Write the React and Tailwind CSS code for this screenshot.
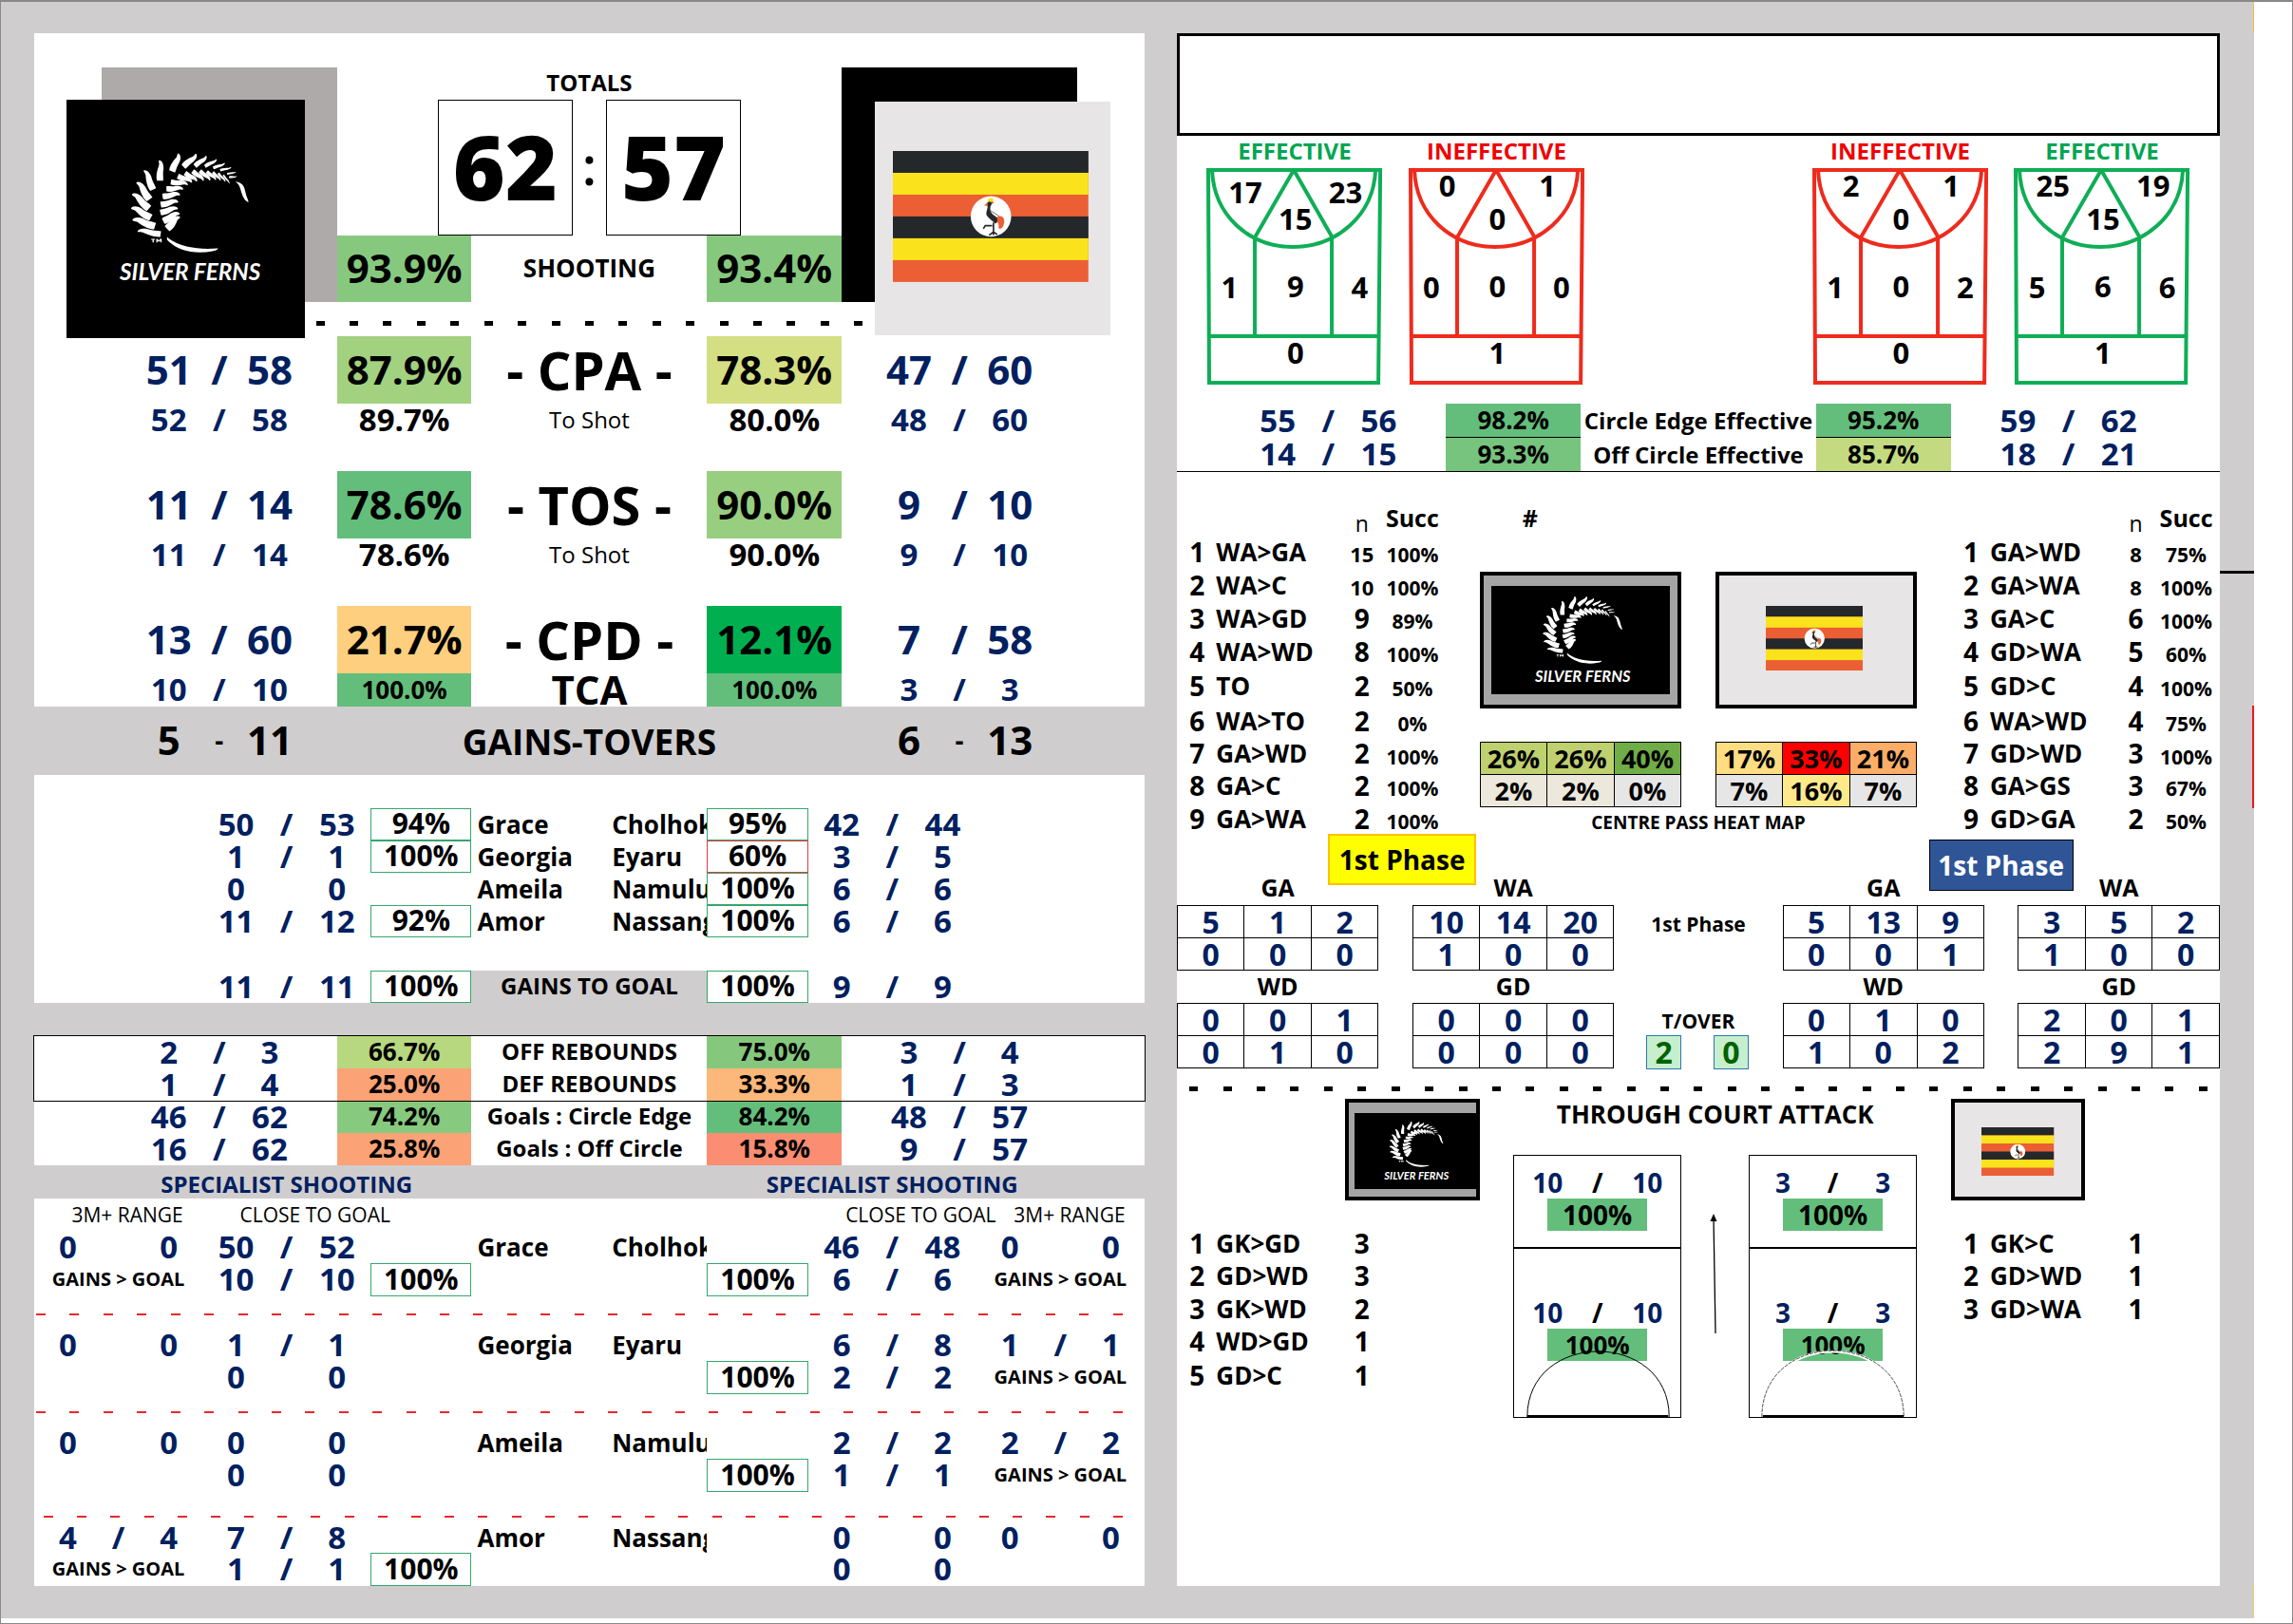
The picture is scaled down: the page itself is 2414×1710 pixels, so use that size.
import React from "react";

const GRID33 = "grid grid-rows-1 grid-cols-[repeat(33,minmax(0,1fr))] items-center [&>*]:row-start-1";
const GRID31 = "grid grid-cols-[repeat(31,minmax(0,1fr))] items-center [&>*]:row-start-1";

/* Column placements of the "made / attempted" figures on the left sheet */
const WIDE_L = ["col-start-4 col-span-2", "col-start-6", "col-start-7 col-span-2"];
const WIDE_R = ["col-start-26 col-span-2", "col-start-28", "col-start-29 col-span-2"];
const NEAR_L = ["col-start-6 col-span-2", "col-start-8", "col-start-9 col-span-2"];
const NEAR_R = ["col-start-24 col-span-2", "col-start-26", "col-start-27 col-span-2"];
const FAR_L = ["col-start-1 col-span-2", "col-start-3", "col-start-4 col-span-2"];
const FAR_R = ["col-start-29 col-span-2", "col-start-31", "col-start-32 col-span-2"];
const COURT_L = ["col-start-3 col-span-2", "col-start-5", "col-start-6 col-span-2"];
const COURT_R = ["col-start-25 col-span-2", "col-start-27", "col-start-28 col-span-2"];

function Ratio({ at, v, sep = "/", size = "text-[33px]", sepSize = "", color = "text-[#002060]" }) {
  if (!v) return null;
  return (
    <>
      <span className={`${at[0]} ${size} ${color} pb-0.5 text-center font-bold`}>{v[0]}</span>
      {!v[2] && <span className={`${at[1]} ${sepSize || size} ${color} pb-0.5 text-center font-bold`}>{sep}</span>}
      <span className={`${at[2]} ${size} ${color} pb-0.5 text-center font-bold`}>{v[1]}</span>
    </>
  );
}

function Shade({ at, bg, size, children }) {
  return (
    <span className={`${at} ${bg} ${size} flex h-full items-center justify-center pb-0.5 font-bold`}>{children}</span>
  );
}

const SH_L = "col-start-10 col-span-4";
const SH_R = "col-start-21 col-span-4";
const MID = "col-start-14 col-span-7 text-center whitespace-nowrap pb-0.5";

function leaf([x1, y1, x2, y2, w]) {
  const dx = x2 - x1;
  const dy = y2 - y1;
  const len = Math.hypot(dx, dy);
  const nx = (-dy / len) * w;
  const ny = (dx / len) * w;
  const p = (t, k) => `${(x1 + dx * t + nx * k).toFixed(1)} ${(y1 + dy * t + ny * k).toFixed(1)}`;
  return `M${p(0, -0.9)} C${p(0.3, -1.3)} ${p(0.6, -0.7)} ${p(0.8, -0.3)} C${p(0.9, -0.2)} ${p(0.98, -0.5)} ${p(1.04, -0.3)} C${p(1.05, 0.5)} ${p(0.85, 1.1)} ${p(0.6, 1)} C${p(0.35, 0.7)} ${p(0.2, 1)} ${p(0, 0.9)} Z`;
}

const LEAVES = [
  [326, 560, 256, 550, 10], [308, 535, 240, 514, 12], [295, 508, 236, 477, 12], [289, 479, 239, 434, 12],
  [291, 450, 253, 397, 12], [302, 419, 276, 360, 11], [324, 391, 324, 329, 11], [362, 362, 383, 308, 11],
  [398, 347, 438, 309, 10], [434, 345, 470, 315, 8], [466, 346, 502, 325, 6], [492, 351, 528, 337, 5],
  [514, 358, 548, 350, 4], [536, 370, 563, 364, 3], [542, 380, 566, 378, 3],
  [346, 543, 384, 506, -12], [334, 519, 383, 494, -11], [325, 492, 378, 478, -10], [326, 467, 379, 457, -10],
  [332, 441, 385, 434, -10], [344, 417, 395, 416, -9], [358, 395, 410, 402, -9], [380, 377, 424, 394, -9],
  [403, 366, 440, 391, -8], [427, 361, 461, 389, -8], [450, 360, 482, 388, -7], [472, 362, 500, 387, -6],
  [491, 364, 515, 389, -5], [508, 367, 530, 393, -4], [524, 373, 543, 399, -3],
];

function Fern({ viewBox, className }) {
  return (
    <svg viewBox={viewBox} className={className} role="img" aria-label="Silver Ferns" preserveAspectRatio="xMidYMid meet">
      <g fill="#fff">
        {LEAVES.map((l, i) => (
          <path key={i} d={leaf(l)} />
        ))}
        <path d="M346 569 C372 592 425 612 507 605 C508 609 500 612 490 614 C430 626 375 610 346 578 Z" />
        <path d="M562 393 C585 397 590 408 594 428 C597 442 601 448 604 459 C594 458 584 440 580 424 C577 410 573 402 562 393 Z" />
        <path d="M296 575 h12 v3 h-4 v8 h-4 v-8 h-4 Z M312 575 h4 l4 5 4 -5 h5 v11 h-4 v-6 l-5 5 -4 -5 v6 h-4 Z" />
        <text x="419" y="705" textAnchor="middle" fontFamily="Lato, sans-serif" fontSize="73" fontWeight="700" fontStyle="italic">
          SILVER FERNS
        </text>
      </g>
    </svg>
  );
}

function Flag({ className }) {
  return (
    <svg viewBox="0 0 618 414" className={className} role="img" aria-label="Uganda">
      <rect width="618" height="414" fill="#ec5e34" />
      <rect width="618" height="69" fill="#24282b" />
      <rect y="69" width="618" height="69" fill="#fae31c" />
      <rect y="207" width="618" height="69" fill="#24282b" />
      <rect y="276" width="618" height="69" fill="#fae31c" />
      <circle cx="310" cy="207" r="64" fill="#fff" />
      <path d="M330 208 C346 200 354 214 352 226 C350 240 342 250 334 244 C336 230 332 222 318 220 Z" fill="#ec5e34" />
      <path d="M298 158 C300 148 314 146 320 154 L312 164 Z" fill="#fae31c" />
      <path d="M304 160 C296 164 294 168 298 172 C304 178 290 196 298 206 C306 216 316 222 324 230 C332 226 332 214 326 208 C316 200 306 194 308 180 C308 172 314 170 312 162 Z" fill="#24282b" />
      <path d="M300 164 L288 172 L300 174 Z M312 158 L320 164 L312 168 Z" fill="#ec5e34" />
      <path d="M318 226 V258 M304 266 L318 256 L330 264 M318 256 V266 M314 236 H292 L286 246" fill="none" stroke="#24282b" strokeWidth="5" />
      <path d="M308 188 L336 206" stroke="#24282b" strokeWidth="2" />
    </svg>
  );
}

function BigStat({ l, lp, lbg, label, r, rp, rbg }) {
  return (
    <div className={`${GRID33} h-[71px]`}>
      <Ratio at={WIDE_L} v={l} size="text-[42px]" />
      <Shade at={SH_L} bg={lbg} size="text-[42px]">{lp}</Shade>
      <span className={`${MID} text-[56px] font-bold`}>{label}</span>
      <Shade at={SH_R} bg={rbg} size="text-[42px]">{rp}</Shade>
      <Ratio at={WIDE_R} v={r} size="text-[42px]" />
    </div>
  );
}

function SubStat({ l, lp, r, rp }) {
  return (
    <div className={`${GRID33} h-[35px]`}>
      <Ratio at={WIDE_L} v={l} />
      <span className={`${SH_L} pb-0.5 text-center text-[33px] font-bold`}>{lp}</span>
      <span className={`${MID} text-[24px]`}>To Shot</span>
      <span className={`${SH_R} pb-0.5 text-center text-[33px] font-bold`}>{rp}</span>
      <Ratio at={WIDE_R} v={r} />
    </div>
  );
}

function Box({ side, v, red }) {
  if (!v) return null;
  return (
    <span
      className={`${side === "l" ? "col-start-11" : "col-start-21"} ${red ? "border-[#e03c3c]" : "border-[#35a76c]"} col-span-3 flex h-full items-center justify-center border bg-white pb-0.5 text-[30px] font-bold`}
    >
      {v}
    </span>
  );
}

function Names({ a, b }) {
  return (
    <>
      <span className="col-start-14 col-span-4 pl-1.5 text-[26px] font-bold whitespace-nowrap">{a}</span>
      <span className="col-start-18 col-span-3 flex h-full items-center overflow-hidden pl-1.5 text-[26px] font-bold whitespace-nowrap">{b}</span>
    </>
  );
}

const SHOOTERS = [
  { l: [50, 53], lp: "94%", a: "Grace", b: "Cholhok", rp: "95%", r: [42, 44] },
  { l: [1, 1], lp: "100%", a: "Georgia", b: "Eyaru", rp: "60%", r: [3, 5], red: true },
  { l: [0, 0, true], a: "Ameila", b: "Namulu", rp: "100%", r: [6, 6] },
  { l: [11, 12], lp: "92%", a: "Amor", b: "Nassang", rp: "100%", r: [6, 6] },
];

const REBOUNDS = [
  { l: [2, 3], lp: "66.7%", lbg: "bg-[#b8d87f]", t: "OFF REBOUNDS", rp: "75.0%", rbg: "bg-[#85c87d]", r: [3, 4] },
  { l: [1, 4], lp: "25.0%", lbg: "bg-[#fba276]", t: "DEF REBOUNDS", rp: "33.3%", rbg: "bg-[#fcb77a]", r: [1, 3] },
];
const GOALS = [
  { l: [46, 62], lp: "74.2%", lbg: "bg-[#87c97e]", t: "Goals : Circle Edge", rp: "84.2%", rbg: "bg-[#63be7b]", r: [48, 57] },
  { l: [16, 62], lp: "25.8%", lbg: "bg-[#fba376]", t: "Goals : Off Circle", rp: "15.8%", rbg: "bg-[#fa8d72]", r: [9, 57] },
];

function ShadedRow({ l, lp, lbg, t, rp, rbg, r }) {
  return (
    <div className={`${GRID33} h-[34px]`}>
      <Ratio at={WIDE_L} v={l} />
      <Shade at={SH_L} bg={lbg} size="text-[26px]">{lp}</Shade>
      <span className={`${MID} text-[24px] font-bold`}>{t}</span>
      <Shade at={SH_R} bg={rbg} size="text-[26px]">{rp}</Shade>
      <Ratio at={WIDE_R} v={r} />
    </div>
  );
}

const SPECIALIST = [
  { fl: [0, 0, true], l: [50, 52], a: "Grace", b: "Cholhok", r: [46, 48], fr: [0, 0, true], gl: true, l2: [10, 10], bl: "100%", br: "100%", r2: [6, 6], gr: true },
  { fl: [0, 0, true], l: [1, 1], a: "Georgia", b: "Eyaru", r: [6, 8], fr: [1, 1], l2: [0, 0, true], br: "100%", r2: [2, 2], gr: true },
  { fl: [0, 0, true], l: [0, 0, true], a: "Ameila", b: "Namulu", r: [2, 2], fr: [2, 2], l2: [0, 0, true], br: "100%", r2: [1, 1], gr: true },
  { fl: [4, 4], l: [7, 8], a: "Amor", b: "Nassang", r: [0, 0, true], fr: [0, 0, true], gl: true, l2: [1, 1], bl: "100%", r2: [0, 0, true] },
];

function RedDashes({ className }) {
  return (
    <div className={`${GRID33} ${className}`} aria-hidden="true">
      {Array.from({ length: 33 }, (_, i) => (
        <span key={i} className="ml-0.5 h-0.5 w-2.5 bg-[#e8282c]" />
      ))}
    </div>
  );
}

function LeftSheet() {
  return (
    <div className="flex flex-col">
      <section className="relative bg-white pt-9">
        <div className="absolute top-9 left-[6.06%] h-[247px] w-[21.2%] bg-[#aeaaa9]" />
        <div className="absolute top-[70px] left-[2.9%] flex h-[251px] w-[21.5%] items-center justify-center bg-black">
          <Fern viewBox="28 135 755 754" className="h-full w-full" />
        </div>
        <div className="absolute top-9 left-[72.73%] h-[247px] w-[21.2%] bg-black" />
        <div className="absolute top-[72px] left-[75.75%] h-[246px] w-[21.2%] bg-[#e7e5e6] pt-13 pr-[23px] pl-[19px]">
          <Flag className="w-full" />
        </div>

        <div className={`${GRID33} h-[34px]`}>
          <h2 className={`${MID} text-[24px] font-bold`}>TOTALS</h2>
        </div>
        <div className={`${GRID33} h-[143px]`}>
          <span className="z-10 col-start-13 col-span-4 flex h-full items-center justify-center border border-black bg-white pb-1 text-[94px] font-extrabold">62</span>
          <span className="col-start-17 pb-2 text-center text-[56px] font-semibold">:</span>
          <span className="z-10 col-start-18 col-span-4 flex h-full items-center justify-center border border-black bg-white pb-1 text-[94px] font-extrabold">57</span>
        </div>
        <div className={`${GRID33} h-[70px]`}>
          <Shade at={SH_L} bg="bg-[#86c97e]" size="text-[42px]">93.9%</Shade>
          <span className={`${MID} text-[26px] font-bold`}>SHOOTING</span>
          <Shade at={SH_R} bg="bg-[#86c97e]" size="text-[42px]">93.4%</Shade>
        </div>
        <div className="grid h-9 grid-cols-[repeat(33,minmax(0,1fr))] items-center pt-2 [&>:first-child]:col-start-9" aria-hidden="true">
          {Array.from({ length: 17 }, (_, i) => (
            <span key={i} className="mx-auto h-[5px] w-[9px] bg-black" />
          ))}
        </div>
        <BigStat l={[51, 58]} lp="87.9%" lbg="bg-[#a2d180]" label="- CPA -" rp="78.3%" rbg="bg-[#d3df82]" r={[47, 60]} />
        <SubStat l={[52, 58]} lp="89.7%" rp="80.0%" r={[48, 60]} />
        <div className="h-9" />
        <BigStat l={[11, 14]} lp="78.6%" lbg="bg-[#63be7b]" label="- TOS -" rp="90.0%" rbg="bg-[#98ce7f]" r={[9, 10]} />
        <SubStat l={[11, 14]} lp="78.6%" rp="90.0%" r={[9, 10]} />
        <div className="h-9" />
        <BigStat l={[13, 60]} lp="21.7%" lbg="bg-[#fdcf7e]" label="- CPD -" rp="12.1%" rbg="bg-[#00b050]" r={[7, 58]} />
        <div className={`${GRID33} h-[35px]`}>
          <Ratio at={WIDE_L} v={[10, 10]} />
          <Shade at={SH_L} bg="bg-[#63be7b]" size="text-[26px]">100.0%</Shade>
          <span className={`${MID} text-[42px] font-bold`}>TCA</span>
          <Shade at={SH_R} bg="bg-[#63be7b]" size="text-[26px]">100.0%</Shade>
          <Ratio at={WIDE_R} v={[3, 3]} />
        </div>
      </section>

      <div className={`${GRID33} h-[72px]`}>
        <Ratio at={WIDE_L} v={[5, 11]} sep="-" size="text-[42px]" sepSize="text-[28px]" color="text-black" />
        <h2 className="col-start-12 col-span-11 text-center text-[37px] font-bold whitespace-nowrap">GAINS-TOVERS</h2>
        <Ratio at={WIDE_R} v={[6, 13]} sep="-" size="text-[42px]" sepSize="text-[28px]" color="text-black" />
      </div>

      <section className="bg-white pt-[35px]">
        {SHOOTERS.map((s) => (
          <div key={s.a} className={`${GRID33} h-[34px]`}>
            <Ratio at={NEAR_L} v={s.l} />
            <Box side="l" v={s.lp} />
            <Names a={s.a} b={s.b} />
            <Box side="r" v={s.rp} red={s.red} />
            <Ratio at={NEAR_R} v={s.r} />
          </div>
        ))}
        <div className={`${GRID33} mt-[35px] h-[34px]`}>
          <Ratio at={NEAR_L} v={[11, 11]} />
          <Box side="l" v="100%" />
          <span className={`${MID} flex h-full items-center justify-center bg-[#d0cdce] text-[24px] font-bold`}>GAINS TO GOAL</span>
          <Box side="r" v="100%" />
          <Ratio at={NEAR_R} v={[9, 9]} />
        </div>
      </section>

      <section className="mt-[35px] bg-white">
        <div className="outline outline-black">
          {REBOUNDS.map((r) => (
            <ShadedRow key={r.t} {...r} />
          ))}
        </div>
        {GOALS.map((r) => (
          <ShadedRow key={r.t} {...r} />
        ))}
      </section>

      <div className={`${GRID33} h-[35px] pt-1 text-[24px] font-bold whitespace-nowrap text-[#002060]`}>
        <h2 className="col-start-3 col-span-11 text-center">SPECIALIST SHOOTING</h2>
        <h2 className="col-start-21 col-span-11 text-center">SPECIALIST SHOOTING</h2>
      </div>

      <section className="bg-white">
        <div className={`${GRID33} h-[34px] text-[21px] whitespace-nowrap`}>
          <span className="col-start-2 col-span-4 pl-1">3M+ RANGE</span>
          <span className="col-start-7 col-span-5 pl-1">CLOSE TO GOAL</span>
          <span className="col-start-25 col-span-5 pl-1">CLOSE TO GOAL</span>
          <span className="col-start-30 col-span-4 pl-1">3M+ RANGE</span>
        </div>
        {SPECIALIST.map((s, i) => (
          <React.Fragment key={s.a}>
            {i > 0 && <RedDashes className={i === 3 ? "h-8 pt-5 pl-2" : "h-[34px] pt-1"} />}
            <div className={`${GRID33} ${i === 3 ? "h-8" : "h-[34px]"}`}>
              <Ratio at={FAR_L} v={s.fl} />
              <Ratio at={NEAR_L} v={s.l} />
              <Names a={s.a} b={s.b} />
              <Ratio at={NEAR_R} v={s.r} />
              <Ratio at={FAR_R} v={s.fr} />
            </div>
            <div className={`${GRID33} h-[35px]`}>
              {s.gl && <span className="col-start-1 col-span-5 pb-0.5 text-center text-[20px] font-bold whitespace-nowrap">GAINS &gt; GOAL</span>}
              <Ratio at={NEAR_L} v={s.l2} />
              <Box side="l" v={s.bl} />
              <Box side="r" v={s.br} />
              <Ratio at={NEAR_R} v={s.r2} />
              {s.gr && <span className="col-start-29 col-span-5 pb-0.5 text-center text-[20px] font-bold whitespace-nowrap">GAINS &gt; GOAL</span>}
            </div>
          </React.Fragment>
        ))}
      </section>
    </div>
  );
}

const SPOTS = [[22, 11], [79, 11], [50.5, 23], [13, 54.5], [50.5, 54], [87, 54.5], [50.5, 84.5]];

function Court({ className, stroke, values, low }) {
  return (
    <div className={`${className} relative -mx-1 h-[230px]`}>
      <svg viewBox="0 0 185 230" preserveAspectRatio="none" className="absolute inset-0 h-full w-full" fill="none" stroke={stroke} strokeWidth="4" aria-hidden="true">
        <path d="M2 2 H183 L181 226 H3 Z" />
        <path d="M6 2 C8 50 45 83 91 83 C137 83 176 50 178 2" />
        <path d="M92 2 L51 73 V177 M92 2 L132 72 V177" />
        <path d="M3 177 H182" />
      </svg>
      {values.map((v, i) => (
        <span
          key={i}
          className="absolute -translate-x-1/2 -translate-y-1/2 text-[31px] font-bold"
          style={{ left: `${SPOTS[i][0]}%`, top: `${SPOTS[i][1] - (low || i > 1 ? 0 : 3)}%` }}
        >
          {v}
        </span>
      ))}
    </div>
  );
}

function PassList({ label, rows, head }) {
  return (
    <table aria-label={label} className="w-full table-fixed border-collapse font-bold whitespace-nowrap">
      <colgroup>
        <col className="w-[12.5%]" />
        <col className="w-1/2" />
        <col className="w-[12.5%]" />
        <col className="w-1/4" />
      </colgroup>
      {head && (
        <thead>
          <tr className="h-[34px]">
            <td />
            <td />
            <th scope="col" className="p-0 pt-2 text-[23px] font-normal">n</th>
            <th scope="col" className="p-0 pb-1 text-[25px]">Succ</th>
          </tr>
        </thead>
      )}
      <tbody>
        {rows.map(([name, n, pct], i) => (
          <tr key={name} className={i === 4 || i === 5 ? "h-[37px]" : i === 6 ? "h-8" : i % 2 && !head ? "h-[34px]" : "h-[35px]"}>
            <td className="p-0 pr-1.5 pb-0.5 text-right text-[28px]">{i + 1}</td>
            <td className="p-0 pb-0.5 pl-1.5 text-[26px]">{name}</td>
            <td className={n > 6 && pct && (n !== 9 && !(n === 8 && i === 3)) ? "p-0 pt-0.5 text-center text-[22px]" : "p-0 pb-0.5 text-center text-[28px]"}>{n}</td>
            <td className="p-0 pt-1.5 text-center text-[21px]">{pct}</td>
          </tr>
        ))}
      </tbody>
    </table>
  );
}

const NZ_LIST = [["WA>GA", 15, "100%"], ["WA>C", 10, "100%"], ["WA>GD", 9, "89%"], ["WA>WD", 8, "100%"], ["TO", 2, "50%"], ["WA>TO", 2, "0%"], ["GA>WD", 2, "100%"], ["GA>C", 2, "100%"], ["GA>WA", 2, "100%"]];
const UG_LIST = [["GA>WD", 8, "75%"], ["GA>WA", 8, "100%"], ["GA>C", 6, "100%"], ["GD>WA", 5, "60%"], ["GD>C", 4, "100%"], ["WA>WD", 4, "75%"], ["GD>WD", 3, "100%"], ["GA>GS", 3, "67%"], ["GD>GA", 2, "50%"]];

function Cells({ className = "", label, rows, size, color, bgs }) {
  return (
    <table aria-label={label} className={`${className} ${size} ${color} w-full table-fixed border-collapse text-center font-bold`}>
      <tbody>
        {rows.map((row, y) => (
          <tr key={y} className="h-[34px]">
            {row.map((v, x) => (
              <td key={x} className={`${bgs ? bgs[y][x] : ""} border border-black p-0`}>{v}</td>
            ))}
          </tr>
        ))}
      </tbody>
    </table>
  );
}

const P = ["col-start-1 col-span-6", "col-start-8 col-span-6", "col-start-19 col-span-6", "col-start-26 col-span-6"];
const PHASE_TOP = [[[5, 1, 2], [0, 0, 0]], [[10, 14, 20], [1, 0, 0]], [[5, 13, 9], [0, 0, 1]], [[3, 5, 2], [1, 0, 0]]];
const PHASE_LOW = [[[0, 0, 1], [0, 1, 0]], [[0, 0, 0], [0, 0, 0]], [[0, 1, 0], [1, 0, 2]], [[2, 0, 1], [2, 9, 1]]];

function Labels({ items, className }) {
  return (
    <div className={`${GRID31} ${className} pb-0.5 text-[25px] font-bold`}>
      {items.map((t, i) => (
        <h3 key={i} className={`${P[i]} text-center`}>{t}</h3>
      ))}
    </div>
  );
}

function HalfFigures({ v }) {
  return (
    <div className="grid h-[35px] grid-cols-5 items-center text-center text-[28px] font-bold text-[#002060]">
      <span className="col-span-2">{v}</span>
      <span className="text-black">/</span>
      <span className="col-span-2">{v}</span>
    </div>
  );
}

function ThroughCourt({ className, v, faint }) {
  return (
    <div className={`${className} relative h-[277px] border border-black`}>
      <div className="h-[98px] border-b-2 border-black pt-2.5">
        <HalfFigures v={v} />
        <div className="mx-auto flex h-[34px] w-3/5 items-center justify-center bg-[#63be7b] text-[28px] font-bold">100%</div>
      </div>
      <div className="pt-[49px]">
        <HalfFigures v={v} />
        <div className="mx-auto flex h-[34px] w-3/5 items-center justify-center bg-[#63be7b] text-[26px] font-bold">100%</div>
      </div>
      <svg viewBox="0 0 177 70" preserveAspectRatio="none" className="absolute bottom-0 left-0 h-[70px] w-full" fill="none" aria-hidden="true">
        {faint && <path d="M14 70 C14 -22 163 -22 163 70" stroke="#fff" strokeWidth="3" />}
        <path d={faint ? "M13 70 C13 -23 164 -23 164 70" : "M14 70 C14 -22 165 -22 165 70"} stroke={faint ? "#555" : "#000"} strokeDasharray={faint ? "4 1" : undefined} />
        <path d="M14 69 H164" stroke="#000" strokeWidth="2" />
      </svg>
    </div>
  );
}

function RightSheet() {
  return (
    <div className="flex flex-col">
      <div className="h-[108px] border-[3px] border-black bg-white" />
      <section className="border-b border-black bg-white">
        <div className={`${GRID31} h-[34px] pb-0.5 text-center text-[24px] font-bold whitespace-nowrap`}>
          <h3 className="col-start-2 col-span-5 text-[#00a651]">EFFECTIVE</h3>
          <h3 className="col-start-8 col-span-5 text-[#f00000]">INEFFECTIVE</h3>
          <h3 className="col-start-20 col-span-5 text-[#f00000]">INEFFECTIVE</h3>
          <h3 className="col-start-26 col-span-5 text-[#00a651]">EFFECTIVE</h3>
        </div>
        <div className={`${GRID31} h-[248px] !items-start`}>
          <Court className="col-start-2 col-span-5" stroke="#0fae56" low values={[17, 23, 15, 1, 9, 4, 0]} />
          <Court className="col-start-8 col-span-5" stroke="#ee2b1c" values={[0, 1, 0, 0, 0, 0, 1]} />
          <Court className="col-start-20 col-span-5" stroke="#ee2b1c" values={[2, 1, 0, 1, 0, 2, 0]} />
          <Court className="col-start-26 col-span-5" stroke="#0fae56" values={[25, 19, 15, 5, 6, 6, 1]} />
        </div>
        <div className={`${GRID31} h-9`}>
          <Ratio at={COURT_L} v={[55, 56]} />
          <Shade at="col-start-9 col-span-4 border-b border-black" bg="bg-[#63be7b]" size="text-[26px]">98.2%</Shade>
          <span className="col-start-13 col-span-7 text-center text-[24px] font-bold whitespace-nowrap">Circle Edge Effective</span>
          <Shade at="col-start-20 col-span-4 border-b border-black" bg="bg-[#63be7b]" size="text-[26px]">95.2%</Shade>
          <Ratio at={COURT_R} v={[59, 62]} />
        </div>
        <div className={`${GRID31} h-[35px]`}>
          <Ratio at={COURT_L} v={[14, 15]} />
          <Shade at="col-start-9 col-span-4" bg="bg-[#76c47d]" size="text-[26px]">93.3%</Shade>
          <span className="col-start-13 col-span-7 text-center text-[24px] font-bold whitespace-nowrap">Off Circle Effective</span>
          <Shade at="col-start-20 col-span-4" bg="bg-[#c3da81]" size="text-[26px]">85.7%</Shade>
          <Ratio at={COURT_R} v={[18, 21]} />
        </div>
      </section>

      <section className="relative flex-1 bg-white pt-[33px]">
        <div className={`${GRID31} !items-start`}>
          <div className="col-start-1 col-span-8">
            <PassList label="Silver Ferns centre passes" rows={NZ_LIST} head />
          </div>
          <div className="col-start-10 col-span-13">
            <div className="grid h-[34px] grid-cols-[repeat(13,minmax(0,1fr))] items-center pb-1 text-center text-[25px] font-bold">
              <span className="col-start-1 col-span-3">#</span>
            </div>
            <div className="mt-[38px] grid h-[143px] grid-cols-[repeat(13,minmax(0,1fr))]">
              <div className="col-span-6 border-4 border-black bg-[#a5a5a5] px-2 py-[11px]">
                <Fern viewBox="-8 256 836 506" className="h-full w-full bg-black" />
              </div>
              <div className="col-start-8 col-span-6 flex items-center justify-center border-4 border-black bg-[#e7e5e6]">
                <Flag className="mr-1 mb-1 w-1/2" />
              </div>
            </div>
            <div className="mt-9 grid grid-cols-[repeat(13,minmax(0,1fr))]">
              <div className="col-span-6">
                <Cells label="Silver Ferns centre pass heat map" size="text-[27px]" color="text-black" rows={[["26%", "26%", "40%"], ["2%", "2%", "0%"]]} bgs={[["bg-[#bfd06f]", "bg-[#bfd06f]", "bg-[#70ad47]"], ["bg-[#ece8dc]", "bg-[#ece8dc]", "bg-[#e7e6e6]"]]} />
              </div>
              <div className="col-start-8 col-span-6">
                <Cells label="Uganda centre pass heat map" size="text-[27px]" color="text-black" rows={[["17%", "33%", "21%"], ["7%", "16%", "7%"]]} bgs={[["bg-[#ffdd82]", "bg-[#ff0000]", "bg-[#fcae68]"], ["bg-[#e7e6e6]", "bg-[#feea8a]", "bg-[#e7e6e6]"]]} />
              </div>
            </div>
            <h3 className="flex h-8 items-center justify-center text-[19px] font-bold">CENTRE PASS HEAT MAP</h3>
          </div>
          <div className="col-start-24 col-span-8">
            <PassList label="Uganda centre passes" rows={UG_LIST} head />
          </div>
        </div>

        <div className="relative pt-[36px]">
          <button type="button" className="absolute -top-1 left-[14.5%] h-[54px] w-[156px] border-2 border-[#ffc000] bg-[#ffff00] text-[28px] font-bold whitespace-nowrap">1st Phase</button>
          <button type="button" className="absolute top-0.5 left-[72.1%] h-[54px] w-[152px] border border-black bg-[#2f5597] text-[28px] font-bold whitespace-nowrap text-white">1st Phase</button>
          <Labels items={["GA", "WA", "GA", "WA"]} className="h-[35px]" />
        </div>
        <div className={`${GRID31} !items-start`}>
          {PHASE_TOP.map((rows, i) => (
            <div key={i} className={P[i]}>
              <Cells label={["GA", "WA", "GA", "WA"][i]} size="text-[32px]" color="text-[#002060]" rows={rows} />
            </div>
          ))}
          <span className="col-start-14 col-span-5 pt-2.5 text-center text-[21px] font-bold">1st Phase</span>
        </div>
        <Labels items={["WD", "GD", "WD", "GD"]} className="h-[34px]" />
        <div className={`${GRID31} !items-start`}>
          {PHASE_LOW.map((rows, i) => (
            <div key={i} className={P[i]}>
              <Cells label={["WD", "GD", "WD", "GD"][i]} size="text-[32px]" color="text-[#002060]" rows={rows} />
            </div>
          ))}
          <div className="col-start-14 col-span-5 grid grid-cols-5 text-center font-bold">
            <h3 className="col-span-5 flex h-[34px] items-center justify-center pt-1 text-[21px]">T/OVER</h3>
            <span className="col-start-2 -ml-0.5 flex h-9 items-center justify-center border border-[#2e75b6] bg-[#c6efce] text-[32px] text-[#006100]">2</span>
            <span className="col-start-4 -ml-0.5 flex h-9 items-center justify-center border border-[#2e75b6] bg-[#c6efce] text-[32px] text-[#006100]">0</span>
          </div>
        </div>
        <div className={`${GRID31} h-[31px] pt-2.5`} aria-hidden="true">
          {Array.from({ length: 31 }, (_, i) => (
            <span key={i} className="mx-auto h-[5px] w-[9px] bg-black" />
          ))}
        </div>

        <div className={`${GRID31} !items-start`}>
          <div className="col-start-1 col-span-9">
            <div className="ml-auto h-[107px] w-4/9 border-4 border-black bg-[#a5a5a5] pt-[11px] pb-2 pl-1.5">
              <Fern viewBox="-8 256 836 506" className="h-full w-full bg-black" />
            </div>
            <div className="w-8/9 pt-7">
              <PassList label="Silver Ferns through court passes" rows={[["GK>GD", 3], ["GD>WD", 3], ["GK>WD", 2], ["WD>GD", 1], ["GD>C", 1]]} />
            </div>
          </div>
          <div className="col-start-10 col-span-14">
            <h2 className="flex h-8 items-center justify-center text-[26px] font-bold">THROUGH COURT ATTACK</h2>
            <div className="mt-[27px] grid grid-cols-[repeat(14,minmax(0,1fr))]">
              <ThroughCourt className="col-start-2 col-span-5" v={10} />
              <svg viewBox="0 0 20 126" className="col-start-7 col-span-2 mx-auto mt-[62px] h-[126px] w-5" aria-hidden="true">
                <path d="M8 4 L10 126" stroke="#000" strokeWidth="1.3" />
                <path d="M8 0 L11.5 8 H4.5 Z" />
              </svg>
              <ThroughCourt className="col-start-9 col-span-5" v={3} faint />
            </div>
          </div>
          <div className="col-start-24 col-span-8">
            <div className="flex h-[107px] w-1/2 items-center justify-center border-4 border-black bg-[#e7e5e6]">
              <Flag className="mt-1 w-[57%]" />
            </div>
            <div className="pt-7">
              <PassList label="Uganda through court passes" rows={[["GK>C", 1], ["GD>WD", 1], ["GD>WA", 1]]} />
            </div>
          </div>
        </div>
      </section>
    </div>
  );
}

export default function App() {
  return (
    <main className="min-h-screen border border-t-2 border-[#8b8889] bg-white pr-[40px] pb-1 font-['Open_Sans','Noto_Sans',sans-serif] leading-none text-black">
      <div className="relative bg-[#d0cdce] pt-[33px] pr-9 pb-[34px] pl-[35px]">
        <div className="grid grid-cols-[33fr_31fr] gap-[34px]">
          <LeftSheet />
          <RightSheet />
        </div>
        <div className="absolute top-[599px] right-0 h-[3px] w-9 bg-black" />
        <div className="absolute top-[741px] right-0 h-[108px] w-0.5 bg-[#f0141e]" />
        <div className="absolute top-0 right-0 h-8 w-px bg-[#f5b942]" />
        <div className="absolute right-0 bottom-0 h-9 w-px bg-[#f5d060]" />
      </div>
    </main>
  );
}
